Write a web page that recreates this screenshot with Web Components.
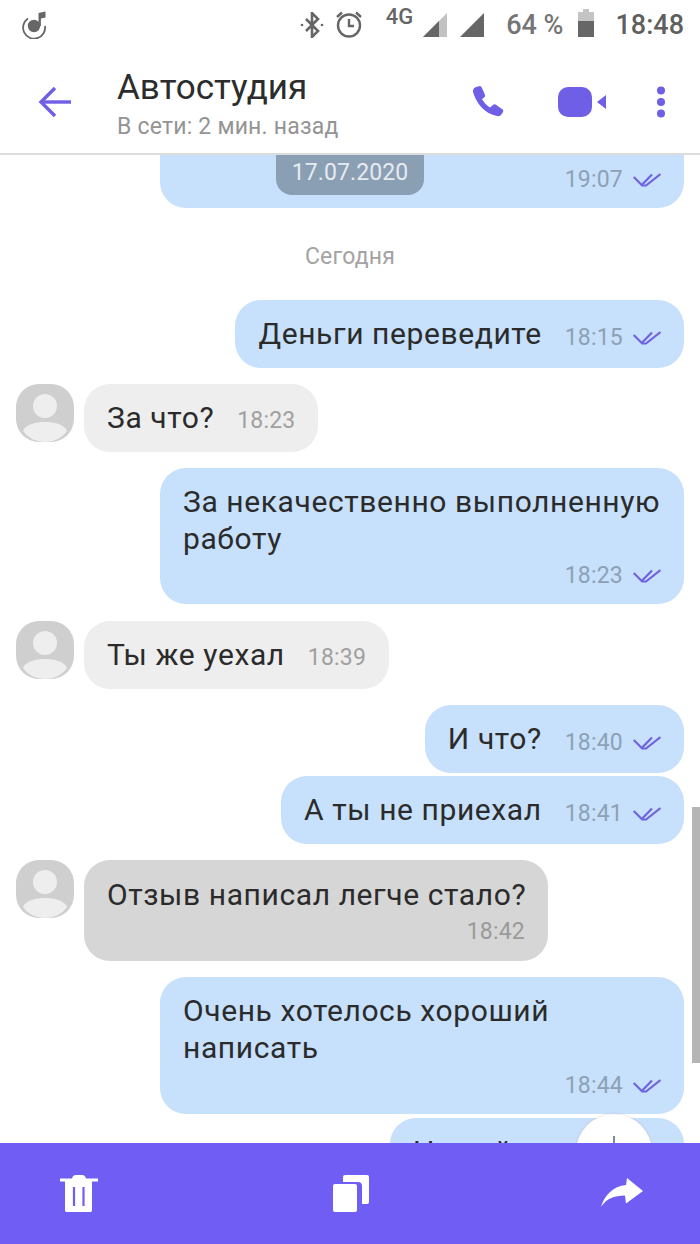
<!DOCTYPE html>
<html lang="ru">
<head>
<meta charset="utf-8">
<title>Автостудия</title>
<style>
  html, body { margin: 0; padding: 0; background: #fff; }
  body { width: 700px; height: 1244px; overflow: hidden; font-family: Roboto, "Liberation Sans", sans-serif; }
</style>
</head>
<body>
<chat-screen>
  <status-bar></status-bar>
  <chat-header name="Автостудия" status="В сети: 2 мин. назад"></chat-header>
  <chat-list>
    <chat-bubble mine clipped time="19:07"></chat-bubble>
    <day-label>Сегодня</day-label>
    <chat-bubble mine inline time="18:15">Деньги переведите</chat-bubble>
    <chat-bubble inline time="18:23" avatar style="margin-top:16px">За что?</chat-bubble>
    <chat-bubble mine wide time="18:23" style="margin-top:16px">За некачественно выполненную<br>работу</chat-bubble>
    <chat-bubble inline time="18:39" avatar style="margin-top:17px">Ты же уехал</chat-bubble>
    <chat-bubble mine inline time="18:40" style="margin-top:16px">И что?</chat-bubble>
    <chat-bubble mine inline time="18:41" style="margin-top:3px">А ты не приехал</chat-bubble>
    <chat-bubble selected time="18:42" avatar style="margin-top:16px">Отзыв написал легче стало?</chat-bubble>
    <chat-bubble mine wide time="18:44" style="margin-top:16px;--meta-gap:5px">Очень хотелось хороший<br>написать</chat-bubble>
    <chat-bubble mine inline time="18:45" style="margin-top:4px;--box-width:294px">Новый</chat-bubble>
  </chat-list>
  <action-bar></action-bar>
</chat-screen>

<script>
const CHECKS = `<svg class="check" width="28" height="14" viewBox="0 0 28 14" fill="none" stroke="#6f62e0" stroke-width="2.200" aria-hidden="true">
  <path d="M.7 4l8 8L19 1.500"/><path d="M9 12.500h4L27.500 1"/></svg>`;

class ChatScreen extends HTMLElement {
  constructor() {
    super();
    this.attachShadow({ mode: "open" });
    this.shadowRoot.innerHTML = `
      <style>
        :host { display: flex; flex-direction: column; width: 700px; height: 1244px; position: relative; overflow: hidden; background: #fff; }
      </style>
      <slot></slot>
    `;
  }
}

class StatusBar extends HTMLElement {
  constructor() {
    super();
    this.attachShadow({ mode: "open" });
    this.shadowRoot.innerHTML = `
      <style>
        :host { display: flex; align-items: center; height: 50px; flex: none; padding: 0 16px 0 22px; color: #666; font-family: Roboto, "Liberation Sans", sans-serif; font-weight: 500; }
        .left { flex: 1; display: flex; }
        svg { display: block; flex: none; }
        .net { font-size: 22px; line-height: 24px; margin: -16px 10px 0 22px; }
        .pct { font-size: 27px; margin: 0 15px 0 22px; color: #757575; }
        .clock { font-size: 27px; margin-left: 21px; color: #5f5f5f; }
        .sig2 { margin-left: 13px; }
        .bt { margin-top: -1px; }
        .alarm { margin: -2px 0 0 10px; }
        .batt { margin-top: -4px; }
      </style>
      <div class="left">
        <svg width="26" height="30" viewBox="0 0 26 30" style="margin-top:-2px">
          <path d="M6 9.500A11 11 0 1 0 23 17" fill="none" stroke="#666" stroke-width="1.800"/>
          <circle cx="12" cy="17" r="6.200" fill="#666"/>
          <path d="M16.500 17V4l7-1.500v6l-4.600 1V17z" fill="#666"/>
        </svg>
      </div>
      <svg class="bt" width="24" height="26" viewBox="0 0 24 26" fill="none" stroke="#666" stroke-width="2.600">
        <path d="M6 7l12 12-6 6V1l6 6L6 19"/>
        <circle cx="2" cy="13" r="1.300" fill="#666" stroke="none"/><circle cx="22" cy="13" r="1.300" fill="#666" stroke="none"/>
      </svg>
      <svg class="alarm" width="30" height="30" viewBox="0 0 30 30" fill="none" stroke="#666" stroke-width="2.400">
        <circle cx="15" cy="16.500" r="11"/><path d="M15 10v7h5"/><path d="M3 8l5-4.500M27 8l-5-4.500"/>
      </svg>
      <span class="net">4G</span>
      <svg width="24" height="24" viewBox="0 0 24 24"><path d="M0 24L24 0v24z" fill="#c2c2c2"/><path d="M0 24L16 8v16z" fill="#666"/></svg>
      <svg class="sig2" width="24" height="24" viewBox="0 0 24 24"><path d="M0 24L24 0v24z" fill="#666"/></svg>
      <span class="pct">64 %</span>
      <svg class="batt" width="16" height="28" viewBox="0 0 16 28"><path d="M5 0h6v3h5v25H0V3h5z" fill="#c4c4c4"/><path d="M0 12h16v16H0z" fill="#666"/></svg>
      <span class="clock">18:48</span>
    `;
  }
}

class ChatHeader extends HTMLElement {
  constructor() {
    super();
    this.attachShadow({ mode: "open" });
    this.shadowRoot.innerHTML = `
      <style>
        :host { display: flex; align-items: center; flex: none; height: 105px; box-sizing: border-box; border-bottom: 2px solid #dcdcdc; background: #fff; position: relative; z-index: 2; font-family: Roboto, "Liberation Sans", sans-serif; }
        .back { width: 117px; flex: none; display: flex; padding-left: 38px; box-sizing: border-box; }
        .who { flex: 1; display: flex; flex-direction: column; gap: 9px; margin-top: 6px; }
        .name { font-size: 35px; line-height: 36px; color: #2c2c2c; }
        .status { font-size: 23px; line-height: 24px; letter-spacing: .2px; color: #949494; }
        .actions { display: flex; align-items: center; margin-right: 34px; }
        svg { display: block; }
      </style>
      <div class="back">
        <svg width="34" height="32" viewBox="0 0 34 32" fill="none" stroke="#6f5ee6" stroke-width="3.400">
          <path d="M33 16H3"/><path d="M17 2L3 16l14 14"/>
        </svg>
      </div>
      <div class="who">
        <div class="name">${this.getAttribute("name")}</div>
        <div class="status">${this.getAttribute("status")}</div>
      </div>
      <div class="actions">
        <svg width="32" height="32" viewBox="0 0 32 32" style="margin-right:53px">
          <path d="M3 1l4-1q1 0 2 2l3 7q.5 1.500-1 2.500L9 13q2.500 5 8 8.500l3-2.500q1-1 2.500-.5l6.500 4.500q2 1 1 3l-2 3q-1 1.500-4 1C12 28 3 17 0 6Q-.5 2 3 1z" fill="#6f5ee6"/>
        </svg>
        <svg width="48" height="30" viewBox="0 0 48 30" style="margin-right:50px">
          <rect x="0" y="0" width="34" height="30" rx="10" fill="#6f5ee6"/>
          <path d="M39 15l9-7v14z" fill="#6f5ee6"/>
        </svg>
        <svg width="10" height="32" viewBox="0 0 10 32" fill="#6f5ee6">
          <circle cx="5" cy="4.500" r="4"/><circle cx="5" cy="16" r="4"/><circle cx="5" cy="27.500" r="4"/>
        </svg>
      </div>
    `;
  }
}

class ChatList extends HTMLElement {
  constructor() {
    super();
    this.attachShadow({ mode: "open" });
    this.shadowRoot.innerHTML = `
      <style>
        :host { display: block; flex: 1; min-height: 0; position: relative; overflow: hidden; }
        .rows { display: flex; flex-direction: column; margin-top: -33px; }
        .date { position: absolute; left: 276px; top: 0; width: 148px; height: 40px; box-sizing: border-box; background: #8a9eb4; color: #e6ebf0; border-radius: 0 0 16px 16px; font: 23px/36px Roboto, "Liberation Sans", sans-serif; letter-spacing: .1px; text-align: center; }
        .bar { position: absolute; right: 0; top: 652px; width: 8px; height: 256px; background: #b5b5b5; }
        .fab { position: absolute; left: 576px; top: 959px; width: 76px; height: 76px; border-radius: 50%; background: #fff; box-shadow: 0 0 2px rgba(180,150,170,.5); }
        .fab::before { content: ""; position: absolute; left: 37px; top: 22px; width: 2px; height: 32px; background: #7c8aa0; }
      </style>
      <div class="rows"><slot></slot></div>
      <div class="date">17.07.2020</div>
      <div class="bar"></div>
      <div class="fab"></div>
    `;
  }
}

class DayLabel extends HTMLElement {
  constructor() {
    super();
    this.attachShadow({ mode: "open" });
    this.shadowRoot.innerHTML = `
      <style>
        :host { display: block; text-align: center; color: #a3a3a3; font: 23px/24px Roboto, "Liberation Sans", sans-serif; letter-spacing: .2px; padding: 37px 0 31px; }
      </style>
      <slot></slot>
    `;
  }
}

class ChatBubble extends HTMLElement {
  constructor() {
    super();
    this.attachShadow({ mode: "open" });
    const mine = this.hasAttribute("mine");
    const time = this.getAttribute("time");
    this.shadowRoot.innerHTML = `
      <style>
        :host { display: flex; flex: none; font-family: Roboto, "Liberation Sans", sans-serif; }
        :host([mine]) { justify-content: flex-end; margin-right: 16px; align-self: flex-end; }
        :host(:not([mine])) { padding-left: 16px; }
        .avatar { width: 58px; height: 58px; margin-right: 10px; flex: none; display: block; }
        .box { box-sizing: border-box; border-radius: 26px; background: #eeeeee; padding: 16px 23px 14px; color: #2b2b2b; font-size: 30px; letter-spacing: .6px; line-height: 37px; width: var(--box-width, auto); }
        :host([mine]) .box { background: #c7e0fb; }
        :host([selected]) .box { background: #d6d6d6; width: 464px; }
        :host([selected]) .text { white-space: nowrap; }
        :host([wide]) .box { width: 524px; padding-top: 15px; padding-bottom: 13px; }
        :host([clipped]) .box { width: 524px; height: 86px; display: flex; flex-direction: column; justify-content: flex-end; padding-bottom: 13px; }
        :host([inline]) .box { display: flex; align-items: baseline; gap: 23px; padding-top: 15px; padding-bottom: 16px; }
        .meta { display: flex; justify-content: flex-end; align-items: center; gap: 10px; color: #a0a0a0; font-size: 23px; letter-spacing: .2px; line-height: 30px; white-space: nowrap; margin-top: var(--meta-gap, 4px); }
        :host([mine]) .meta { color: #8da0b5; }
        :host([selected]) .meta { color: #9a9a9a; }
        :host([inline]) .meta { align-self: center; line-height: 26px; margin-top: 6px; margin-left: auto; }
        :host([inline][mine]) .meta { margin-top: 9px; }
        .check { display: block; }
      </style>
      ${this.hasAttribute("avatar") ? `
      <svg class="avatar" viewBox="0 0 58 58">
        <rect width="58" height="58" rx="23" fill="#cfcfcf"/>
        <circle cx="29" cy="22" r="12" fill="#eeeeee"/>
        <path d="M7 47c3-7 13-9 22-9s19 2 22 9c-5 7-13 11-22 11S12 54 7 47z" fill="#eeeeee"/>
      </svg>` : ""}
      <div class="box">
        <div class="text"><slot></slot></div>
        <div class="meta">${time}${mine ? CHECKS : ""}</div>
      </div>
    `;
  }
}

class ActionBar extends HTMLElement {
  constructor() {
    super();
    this.attachShadow({ mode: "open" });
    this.shadowRoot.innerHTML = `
      <style>
        :host { display: flex; justify-content: space-between; align-items: flex-start; flex: none; height: 101px; padding: 31px 56px 0 60px; box-sizing: border-box; background: #705ef4; position: relative; z-index: 2; }
        svg { display: block; }
      </style>
      <svg width="38" height="38" viewBox="0 0 38 38">
        <path d="M0 4.500h12c.5-2.500 2-3.500 4-3.500h6c2 0 3.500 1 4 3.500h12v3H0z" fill="#fff"/>
        <path d="M5 7h27v29c0 1.500-1 2.500-2.500 2.500h-22C6 38.500 5 37.500 5 36z" fill="#fff"/>
        <path d="M14 13v19M23.500 13v19" stroke="#705ef4" stroke-width="2.200"/>
      </svg>
      <svg width="36" height="37" viewBox="0 0 36 37" style="margin:1px 0 0 4px">
        <path d="M12 0h22a2 2 0 0 1 2 2v25a2 2 0 0 1-2 2h-5V11a4 4 0 0 0-4-4H10V2a2 2 0 0 1 2-2z" fill="#fff"/>
        <rect x="0" y="9" width="24" height="28" rx="2" fill="#fff"/>
      </svg>
      <svg width="44" height="30" viewBox="0 0 44 30" style="margin-top:4px">
        <path d="M27 0l16 13-17 12.500-1-8C14 17.500 6 21 1 29 4 18 13 8 26 7z" fill="#fff"/>
      </svg>
    `;
  }
}

customElements.define("chat-screen", ChatScreen);
customElements.define("status-bar", StatusBar);
customElements.define("chat-header", ChatHeader);
customElements.define("chat-list", ChatList);
customElements.define("day-label", DayLabel);
customElements.define("chat-bubble", ChatBubble);
customElements.define("action-bar", ActionBar);
</script>
</body>
</html>
